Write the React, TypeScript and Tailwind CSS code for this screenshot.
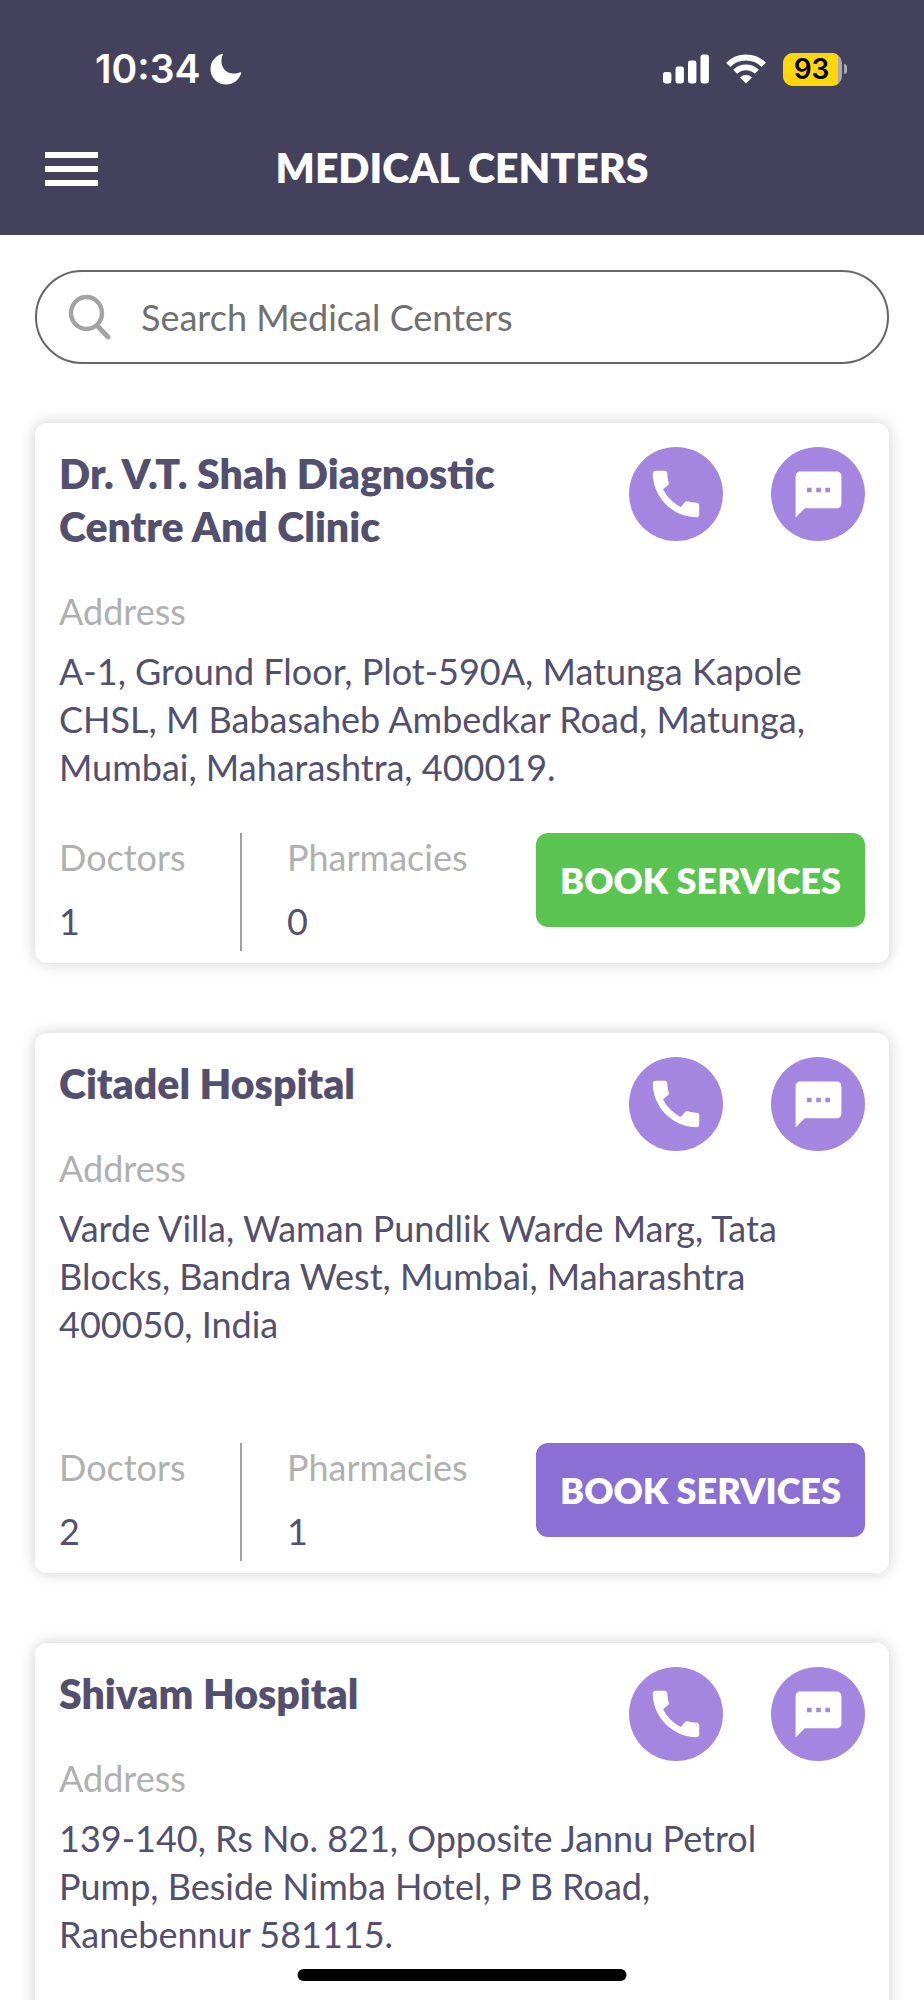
import { useState } from "react";
import { MdCall, MdSms } from "react-icons/md";

interface Center {
  name: string;
  address: string;
  doctors?: number;
  pharmacies?: number;
  available?: boolean;
}

const CENTERS: Center[] = [
  {
    name: "Dr. V.T. Shah Diagnostic Centre And Clinic",
    address:
      "A-1, Ground Floor, Plot-590A, Matunga Kapole CHSL, M Babasaheb Ambedkar Road, Matunga, Mumbai, Maharashtra, 400019.",
    doctors: 1,
    pharmacies: 0,
    available: true,
  },
  {
    name: "Citadel Hospital",
    address:
      "Varde Villa, Waman Pundlik Warde Marg, Tata Blocks, Bandra West, Mumbai, Maharashtra 400050, India",
    doctors: 2,
    pharmacies: 1,
  },
  {
    name: "Shivam Hospital",
    address:
      "139-140, Rs No. 821, Opposite Jannu Petrol Pump, Beside Nimba Hotel, P B Road, Ranebennur 581115.",
  },
];

function StatusBar() {
  return (
    <div className="flex h-[138px] items-center justify-between pl-[95px] pr-[77px] font-['Inter',sans-serif]">
      <div className="flex items-center gap-2.5">
        <span className="text-[39px] font-semibold leading-12">10:34</span>
        <svg width="32" height="32" viewBox="0 0 32 32" fill="currentColor" aria-hidden="true">
          <path d="M12 0.8C12.7 0.5 13.2 0.9 12.9 1.6C11.9 3.6 11.4 5.6 11.4 8C11.4 15.4 16.6 20.6 23.9 20.6C26.3 20.6 28.3 20.2 30.3 19.3C31 19 31.5 19.5 31.2 20.2C28.9 27 23.3 31.5 16.3 31.5C7.4 31.5 0.5 24.7 0.5 15.9C0.5 8.9 5.3 3 12 0.8Z" />
        </svg>
      </div>
      <div className="flex items-center gap-[17px]">
        <svg width="46" height="30" viewBox="0 0 46 30" fill="currentColor" aria-hidden="true">
          <rect x="0" y="18" width="8.4" height="11.5" rx="2.4" />
          <rect x="12.5" y="12.5" width="8.4" height="17" rx="2.4" />
          <rect x="25" y="6.5" width="8.4" height="23" rx="2.4" />
          <rect x="37.5" y="0.5" width="8.4" height="29" rx="2.4" />
        </svg>
        <svg width="40" height="30" viewBox="0 0 40 30" fill="none" aria-hidden="true">
          <path d="M2.2 10.8A25.2 25.2 0 0 1 37.8 10.8" stroke="currentColor" strokeWidth="6" />
          <path d="M9.2 17.8A15.3 15.3 0 0 1 30.8 17.8" stroke="currentColor" strokeWidth="5.6" />
          <path d="M14 23.4A8.6 8.6 0 0 1 26 23.4L20.6 28.9Q20 29.5 19.4 28.9Z" fill="currentColor" />
        </svg>
        <div className="flex items-center gap-0.5">
          <div className="flex h-[33px] w-[59px] items-center overflow-hidden rounded-[10px] bg-[#a9a8b4]">
            <span className="flex h-full w-[55px] items-center justify-center bg-[#ffd60a] pl-0.5 text-[28px] font-semibold text-black">
              93
            </span>
          </div>
          <span className="h-2.5 w-[3px] rounded-r-full bg-[#a9a8b4]" />
        </div>
      </div>
    </div>
  );
}

function Header() {
  return (
    <header className="shrink-0 bg-[#43415c] text-white">
      <StatusBar />
      <div className="grid h-[97px] grid-cols-[1fr_auto_1fr] items-start px-[45px]">
        <button type="button" aria-label="Open menu" className="flex h-[62px] w-[53px] flex-col justify-center gap-2">
          <span className="h-1.5 w-full bg-white" />
          <span className="h-1.5 w-full bg-white" />
          <span className="h-1.5 w-full bg-white" />
        </button>
        <h1 className="text-[41px] font-extrabold leading-[60px]">MEDICAL CENTERS</h1>
      </div>
    </header>
  );
}

function SearchBox() {
  const [query, setQuery] = useState("");

  return (
    <label className="flex h-[94px] items-center gap-[30px] rounded-full border-2 border-[#666] px-[30px]">
      <svg width="44" height="46" viewBox="0 0 44 46" fill="none" stroke="#a3a3a3" aria-hidden="true">
        <ellipse cx="19.5" cy="19" rx="15.5" ry="16" strokeWidth="4.4" />
        <path d="M31 32.5L41 43" strokeWidth="4.8" strokeLinecap="round" />
      </svg>
      <input
        type="text"
        value={query}
        onChange={(e) => setQuery(e.target.value)}
        placeholder="Search Medical Centers"
        aria-label="Search Medical Centers"
        className="min-w-0 flex-1 text-[36px] text-[#52506e] outline-none placeholder:text-[#707070]"
      />
    </label>
  );
}

function CenterCard({ center }: { center: Center }) {
  return (
    <article className="flex min-h-[540px] flex-col justify-between rounded-xl bg-white px-6 pb-3 pt-6 shadow-[0_0_16px_rgba(0,0,0,0.2)]">
      <div>
        <div className="flex items-start justify-between">
          <div className="w-[500px]">
            <h2 className="text-[41px] font-extrabold leading-[53px] text-[#52506e]">{center.name}</h2>
            <p className="mt-[34px] text-[36px] leading-12 text-[#b0b0b0]">Address</p>
          </div>
          <div className="flex shrink-0 gap-12">
            <button
              type="button"
              aria-label={`Call ${center.name}`}
              className="flex size-[94px] items-center justify-center rounded-full bg-[#a486e0] text-white"
            >
              <MdCall size={62} />
            </button>
            <button
              type="button"
              aria-label={`Message ${center.name}`}
              className="flex size-[94px] items-center justify-center rounded-full bg-[#a486e0] text-white"
            >
              <MdSms size={55} />
            </button>
          </div>
        </div>
        <p className="mt-3 pr-6 text-[36px] leading-12 text-[#52506e]">{center.address}</p>
      </div>

      {center.doctors !== undefined && (
        <div className="flex items-start justify-between">
          <dl className="flex h-[118px] text-[36px] leading-12">
            <div className="w-[183px] border-r-2 border-[#a0a0a0]">
              <dt className="text-[#b0b0b0]">Doctors</dt>
              <dd className="mt-4 text-[#52506e]">{center.doctors}</dd>
            </div>
            <div className="pl-[45px]">
              <dt className="text-[#b0b0b0]">Pharmacies</dt>
              <dd className="mt-4 text-[#52506e]">{center.pharmacies}</dd>
            </div>
          </dl>
          <button
            type="button"
            className={`h-[94px] w-[329px] rounded-xl text-[36px] font-extrabold text-white ${
              center.available ? "bg-[#5ac451]" : "bg-[#8c6fd4]"
            }`}
          >
            BOOK SERVICES
          </button>
        </div>
      )}
    </article>
  );
}

export default function App() {
  return (
    <div className="flex h-screen flex-col overflow-hidden bg-white font-['Lato',sans-serif]">
      <Header />
      <main className="flex-1 overflow-y-auto px-[35px] pb-20 pt-[35px] [scrollbar-width:none]">
        <SearchBox />
        <div className="mt-[59px] flex flex-col gap-[70px]">
          {CENTERS.map((center) => (
            <CenterCard key={center.name} center={center} />
          ))}
        </div>
      </main>
      <div className="fixed bottom-[19px] left-1/2 h-3 w-[329px] -translate-x-1/2 rounded-full bg-black" />
    </div>
  );
}
